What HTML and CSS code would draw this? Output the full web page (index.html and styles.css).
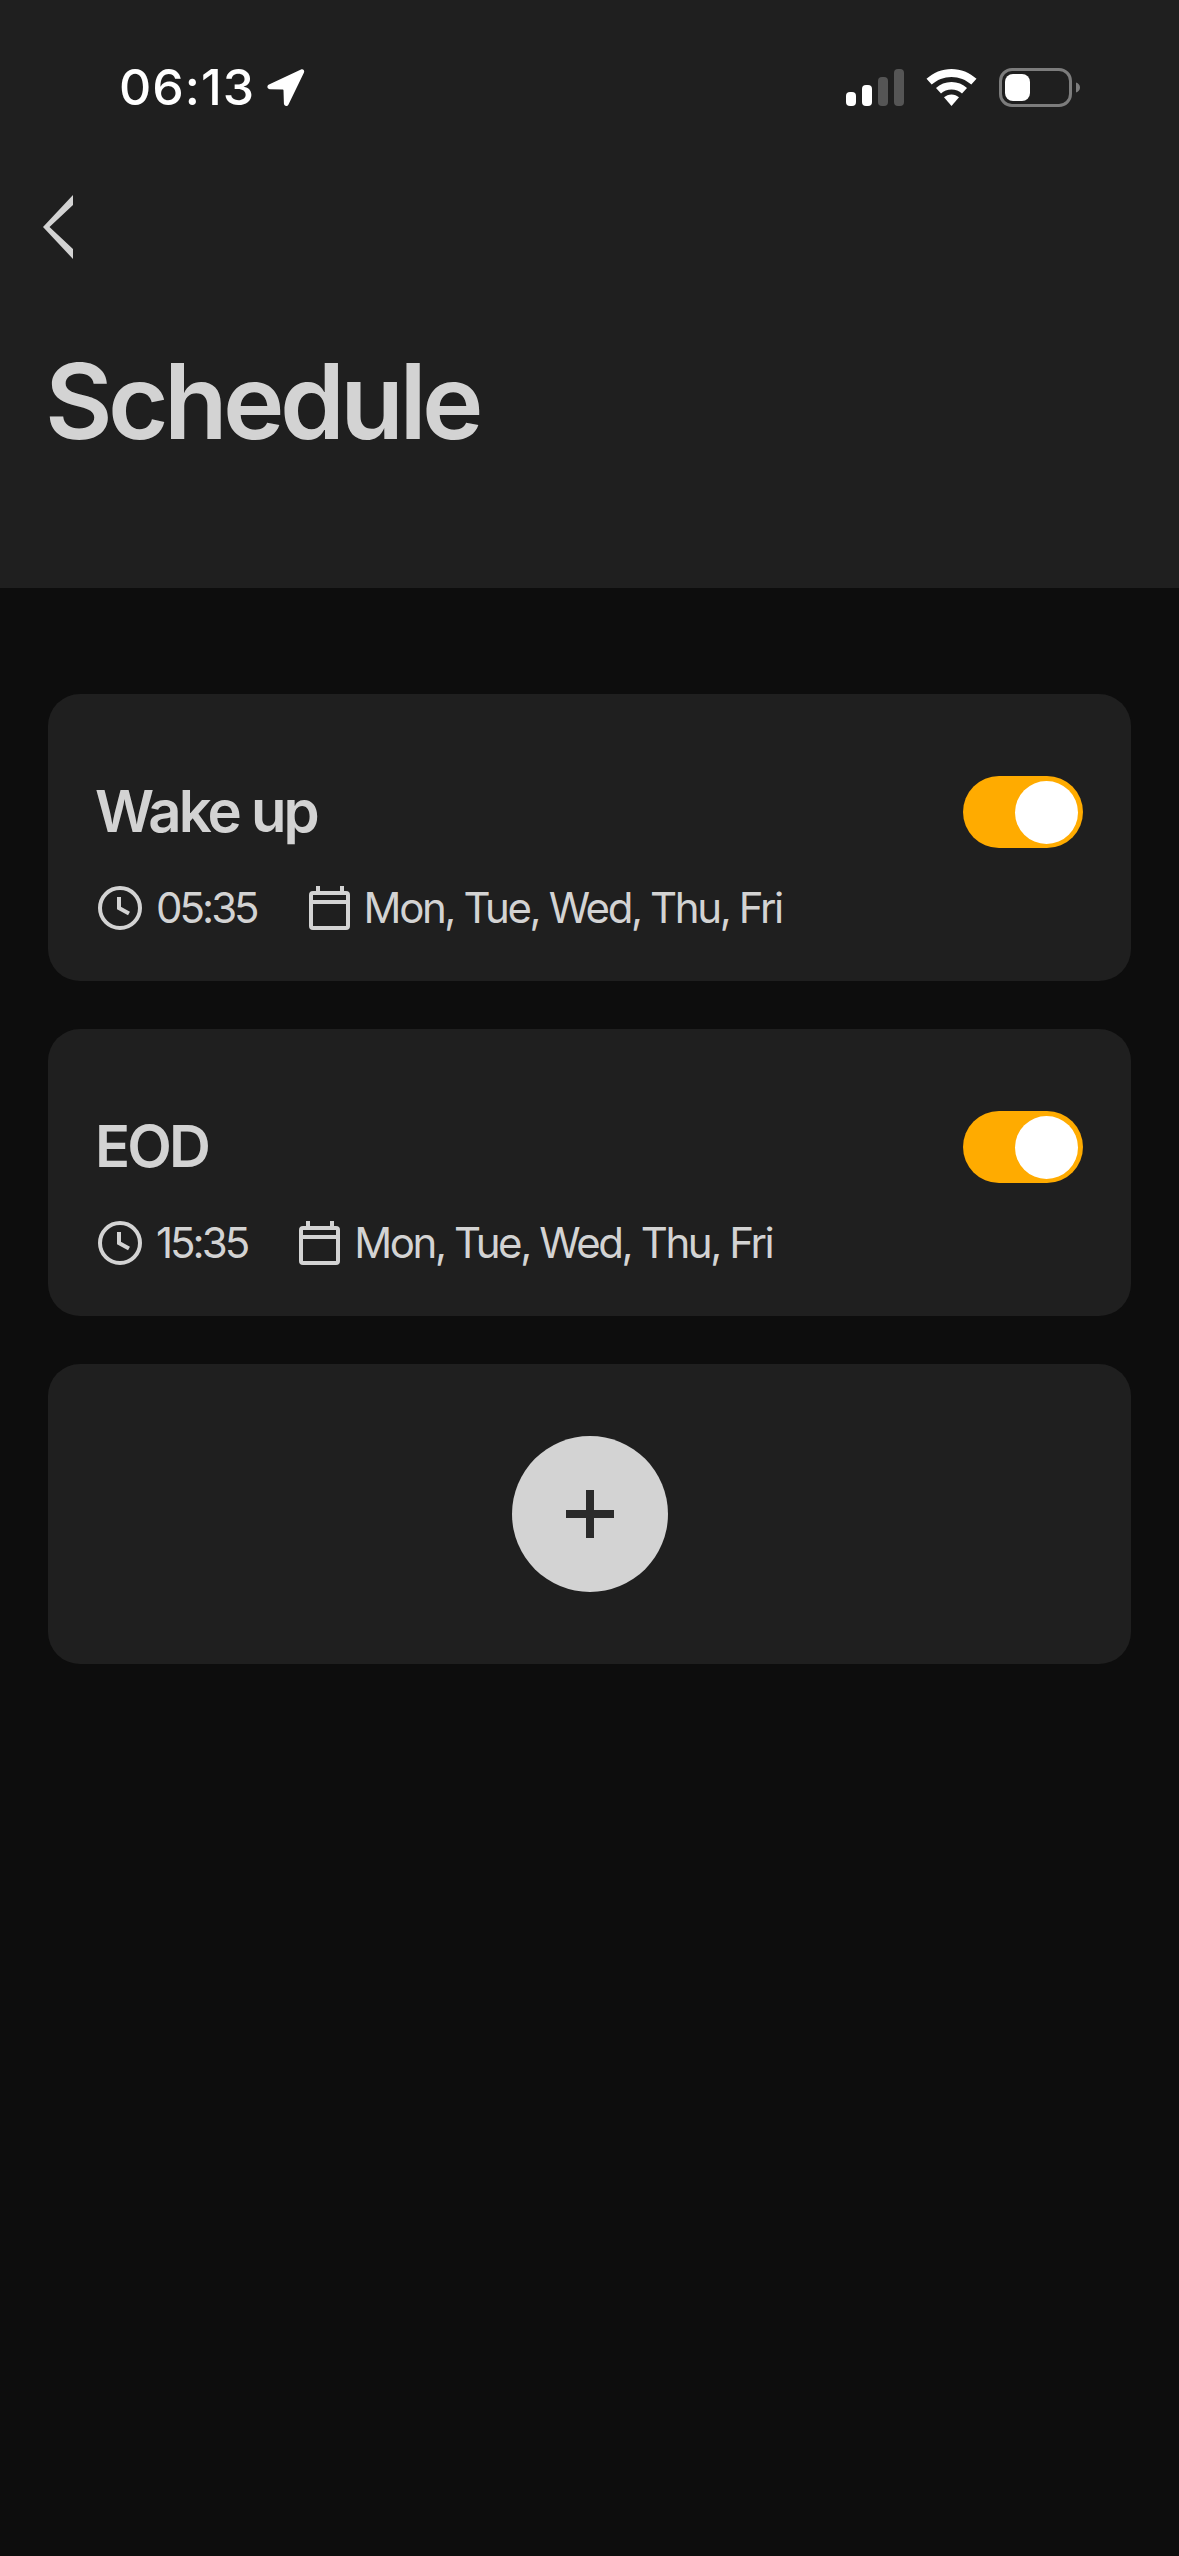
FILE: index.html
```html
<!DOCTYPE html>
<html lang="en">
<head>
    <meta charset="UTF-8">
    <meta name="viewport" content="width=device-width, initial-scale=1.0">
    <title>Schedule</title>
    <link rel="stylesheet" href="styles.css">
</head>
<body>
    <header class="header">
        <div class="status-bar">
            <div class="status-left">
                <span class="status-time">06:13</span>
                <svg class="icon-location" width="39" height="39" viewBox="0 0 39 39">
                    <path d="M35 1.5 3 16.500c-2.600 1.300-1.800 4.600 1 4.700l12.500.3c.6 0 1 .4 1 1l.4 13c.1 2.800 3.400 3.300 4.600.9L38 4.500c.9-2-1-3.900-3-3z" fill="#fff"/>
                </svg>
            </div>
            <div class="status-right">
                <svg class="icon-signal" width="58" height="37" viewBox="0 0 58 37">
                    <rect x="0" y="23" width="10" height="14" rx="4" fill="#fff"/>
                    <rect x="16" y="16" width="10" height="21" rx="4" fill="#fff"/>
                    <rect x="32" y="8" width="10" height="29" rx="4" fill="#555"/>
                    <rect x="48" y="0" width="10" height="37" rx="4" fill="#555"/>
                </svg>
                <svg class="icon-wifi" width="51" height="37" viewBox="0 0 51 37">
                    <path d="M25.500 0C16 0 7.300 3.700.5 9.800l5.200 5.800C11 10.800 18 8 25.500 8s14.500 2.800 19.800 7.600l5.200-5.800C43.700 3.700 35 0 25.500 0z" fill="#fff"/>
                    <path d="M25.500 13c-6 0-11.400 2.300-15.500 6l5 5.600c2.800-2.500 6.500-4 10.500-4s7.700 1.500 10.500 4l5-5.600c-4.100-3.700-9.500-6-15.500-6z" fill="#fff"/>
                    <path d="M25.500 25.500c-2.900 0-5.500 1.100-7.500 2.800L25.500 37 33 28.300c-2-1.700-4.600-2.800-7.500-2.800z" fill="#fff"/>
                </svg>
                <svg class="icon-battery" width="82" height="39" viewBox="0 0 82 39">
                    <rect x="1.500" y="1.500" width="70" height="36" rx="11.500" fill="none" stroke="#7c7c7c" stroke-width="3"/>
                    <rect x="6" y="6" width="25" height="27" rx="8" fill="#fff"/>
                    <path d="M77 14.500c2.500.8 4 2.700 4 5s-1.500 4.200-4 5z" fill="#7c7c7c"/>
                </svg>
            </div>
        </div>
        <button class="back-button" aria-label="Back">
            <svg width="31" height="64" viewBox="0 0 31 64">
                <path d="M30 0v10L6.500 32 30 54v10L0 32z" fill="#d3d3d3"/>
            </svg>
        </button>
        <h1 class="title">Schedule</h1>
    </header>

    <main class="list">
        <section class="card">
            <div class="card-top">
                <h2 class="card-name">Wake up</h2>
                <span class="toggle"><span class="toggle-knob"></span></span>
            </div>
            <div class="card-meta">
                <span class="meta-item meta-time">
                    <svg class="icon-meta" width="44" height="44" viewBox="0 0 44 44">
                        <circle cx="22" cy="22" r="20" fill="none" stroke="#d3d3d3" stroke-width="4"/>
                        <path d="M21 11v11l10 5.500" fill="none" stroke="#d3d3d3" stroke-width="4"/>
                    </svg>
                    05:35
                </span>
                <span class="meta-item">
                    <svg class="icon-meta" width="41" height="44" viewBox="0 0 41 44">
                        <rect x="2" y="7" width="37" height="35" rx="2" fill="none" stroke="#d3d3d3" stroke-width="4"/>
                        <path d="M2 16h37M9 0v8M33 0v8" fill="none" stroke="#d3d3d3" stroke-width="4"/>
                    </svg>
                    Mon, Tue, Wed, Thu, Fri
                </span>
            </div>
        </section>

        <section class="card">
            <div class="card-top">
                <h2 class="card-name">EOD</h2>
                <span class="toggle"><span class="toggle-knob"></span></span>
            </div>
            <div class="card-meta">
                <span class="meta-item meta-time">
                    <svg class="icon-meta" width="44" height="44" viewBox="0 0 44 44">
                        <circle cx="22" cy="22" r="20" fill="none" stroke="#d3d3d3" stroke-width="4"/>
                        <path d="M21 11v11l10 5.500" fill="none" stroke="#d3d3d3" stroke-width="4"/>
                    </svg>
                    15:35
                </span>
                <span class="meta-item">
                    <svg class="icon-meta" width="41" height="44" viewBox="0 0 41 44">
                        <rect x="2" y="7" width="37" height="35" rx="2" fill="none" stroke="#d3d3d3" stroke-width="4"/>
                        <path d="M2 16h37M9 0v8M33 0v8" fill="none" stroke="#d3d3d3" stroke-width="4"/>
                    </svg>
                    Mon, Tue, Wed, Thu, Fri
                </span>
            </div>
        </section>

        <section class="card card-add">
            <button class="add-button" aria-label="Add">
                <svg width="48" height="48" viewBox="0 0 48 48">
                    <path d="M20 0h8v20h20v8H28v20h-8V28H0v-8h20z" fill="#2a2a2a"/>
                </svg>
            </button>
        </section>
    </main>
</body>
</html>
```

FILE: styles.css
```css
html, body {
    margin: 0;
    padding: 0;
    min-height: 100vh;
    background-color: #0d0d0d;
    color: #d3d3d3;
    font-family: 'Inter', 'Liberation Sans', sans-serif;
}

button {
    padding: 0;
    border: 0;
    background: none;
    cursor: pointer;
}

svg {
    display: block;
    flex-shrink: 0;
}

/* Header */
.header {
    height: 588px;
    box-sizing: border-box;
    background-color: #1f1f1f;
    overflow: hidden;
}

.status-bar {
    display: flex;
    justify-content: space-between;
    align-items: center;
    height: 39px;
    padding: 68px 98px 0 119px;
}

.status-left {
    display: flex;
    align-items: center;
    gap: 11px;
}

.status-time {
    color: #fff;
    font-size: 50px;
    font-weight: 500;
    line-height: 39px;
    letter-spacing: 1px;
}

.status-right {
    display: flex;
    align-items: center;
    gap: 22px;
}

.back-button {
    display: block;
    margin: 88px 0 0 43px;
}

.title {
    margin: 77px 0 0 45px;
    font-size: 104px;
    font-weight: 600;
    line-height: 130px;
    letter-spacing: -4.6px;
}

/* Cards */
.list {
    display: flex;
    flex-direction: column;
    gap: 48px;
    padding: 106px 48px;
}

.card {
    padding: 82px 48px 51px;
    border-radius: 32px;
    background-color: #1f1f1f;
}

.card-top {
    display: flex;
    justify-content: space-between;
    align-items: center;
}

.card-name {
    margin: 0 0 2px -1px;
    font-size: 58px;
    font-weight: 600;
    line-height: 70px;
    letter-spacing: -2.8px;
}

.toggle {
    display: flex;
    justify-content: flex-end;
    align-items: center;
    width: 120px;
    height: 72px;
    padding-right: 5px;
    box-sizing: border-box;
    border-radius: 36px;
    background-color: #ffab00;
}

.toggle-knob {
    width: 63px;
    height: 63px;
    border-radius: 50%;
    background-color: #fff;
}

.card-meta {
    display: flex;
    gap: 52px;
    margin: 38px 0 0 2px;
    font-size: 42px;
    line-height: 44px;
    letter-spacing: -2.4px;
}

.meta-item {
    display: flex;
    align-items: center;
    gap: 14px;
}

.meta-time {
    letter-spacing: -3px;
}

.card-add {
    display: flex;
    justify-content: center;
    padding: 72px 48px;
}

.add-button {
    display: flex;
    justify-content: center;
    align-items: center;
    width: 156px;
    height: 156px;
    border-radius: 50%;
    background-color: #d3d3d3;
}
```
